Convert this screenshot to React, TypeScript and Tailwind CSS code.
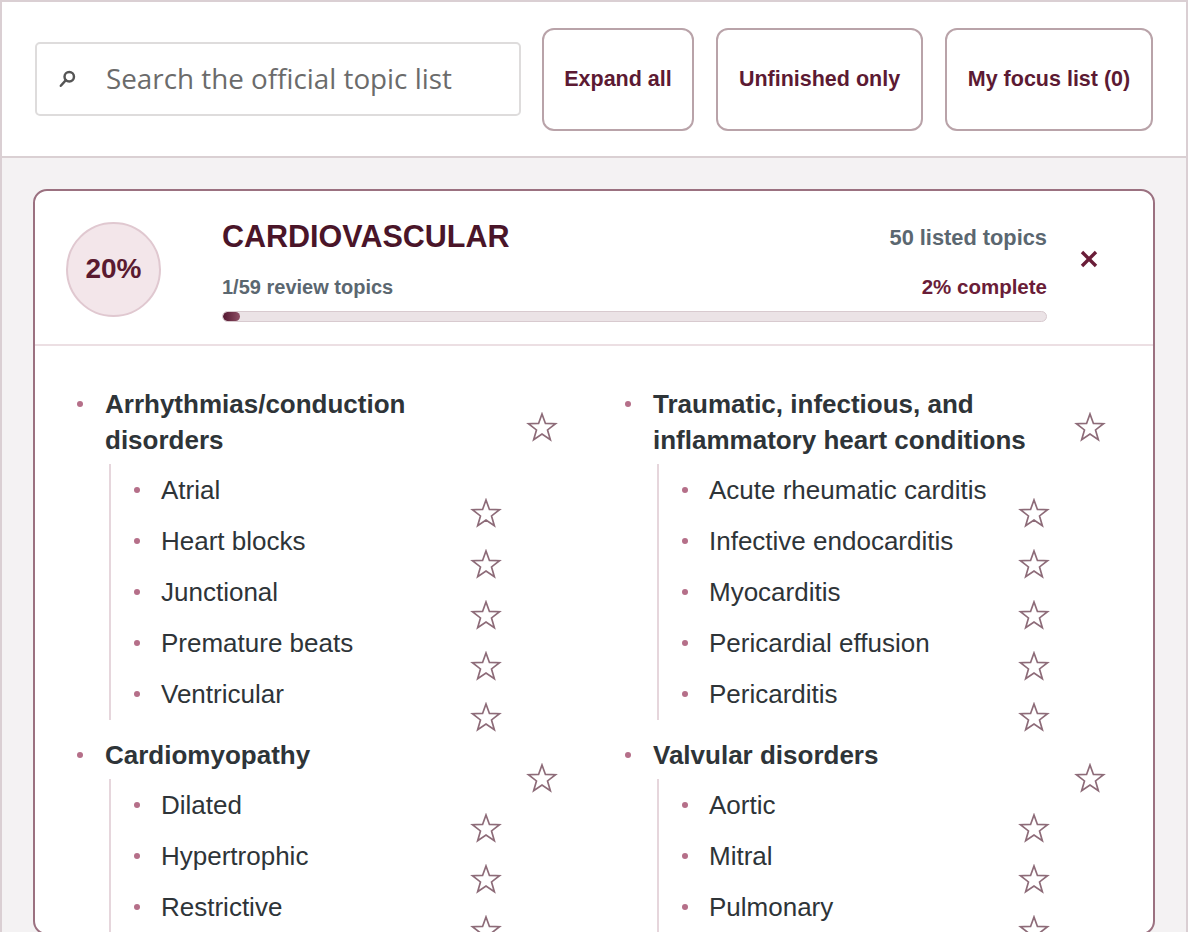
import React from 'react'

const sans = { fontFamily: '"Liberation Sans", Arial, Helvetica, sans-serif' }

type Topic = { name: string; subs: string[] }

const LEFT: Topic[] = [
  { name: 'Arrhythmias/conduction disorders', subs: ['Atrial', 'Heart blocks', 'Junctional', 'Premature beats', 'Ventricular'] },
  { name: 'Cardiomyopathy', subs: ['Dilated', 'Hypertrophic', 'Restrictive'] },
]

const RIGHT: Topic[] = [
  {
    name: 'Traumatic, infectious, and inflammatory heart conditions',
    subs: ['Acute rheumatic carditis', 'Infective endocarditis', 'Myocarditis', 'Pericardial effusion', 'Pericarditis'],
  },
  { name: 'Valvular disorders', subs: ['Aortic', 'Mitral', 'Pulmonary'] },
]

const BUTTONS = [
  { label: 'Expand all', w: 'w-[152px]' },
  { label: 'Unfinished only', w: 'w-[207px]' },
  { label: 'My focus list (0)', w: 'w-[208px]' },
]

function Star() {
  return (
    <svg viewBox="0 0 24 24" className="w-[32px] h-[31px] shrink-0 mt-[26px] mb-[-21px] mr-[7px]">
      <polygon
        points="12,1.5 14.65,8.86 22.46,9.1 16.28,13.89 18.47,21.4 12,17 5.53,21.4 7.72,13.89 1.54,9.1 9.35,8.86"
        fill="none"
        stroke="#8d6b78"
        strokeWidth="1.3"
      />
    </svg>
  )
}

function Dot({ className = '' }: { className?: string }) {
  return <span className={'block w-[6px] h-[6px] rounded-full bg-[#b56f89] shrink-0 mt-[15px] ' + className} />
}

function TopicItem({ topic }: { topic: Topic }) {
  return (
    <li>
      <div className="flex items-start">
        <Dot className="ml-[2px]" />
        <span className="ml-[22px] mr-[10px] flex-1 text-[26px] leading-[36px] font-bold text-[#2e3438]">{topic.name}</span>
        <Star />
      </div>
      <ul className="mt-[6px] ml-[34px] mr-[56px] border-l-2 border-[#e6d6dc] pl-[23px] py-[8px] flex flex-col gap-[15px]">
        {topic.subs.map((s) => (
          <li key={s} className="flex items-start">
            <Dot />
            <span className="ml-[21px] flex-1 text-[26px] leading-[36px] text-[#2e3438]">{s}</span>
            <Star />
          </li>
        ))}
      </ul>
    </li>
  )
}

export default function App() {
  return (
    <div className="w-[1188px] h-[932px] overflow-hidden border-x-2 border-t-2 border-[#dacfd3] bg-[#f4f2f3]" style={sans}>
      <header className="h-[156px] bg-white border-b-2 border-[#dad0d3] flex items-center pl-[33px]">
        <div className="w-[486px] h-[74px] border-2 border-[#dedcdc] rounded-[5px] flex items-center pl-[21px]">
          <svg viewBox="0 0 16 16" className="w-[18px] h-[18px]">
            <circle cx="10" cy="6" r="4.2" fill="none" stroke="#555" strokeWidth="2.2" />
            <line x1="7" y1="9" x2="2.5" y2="14" stroke="#555" strokeWidth="2.2" strokeLinecap="round" />
          </svg>
          <span className="ml-[30px] text-[27.8px] text-[#6b6b6b]" style={{ fontFamily: '"Open Sans", "Noto Sans", sans-serif' }}>
            Search the official topic list
          </span>
        </div>
        <div className="flex gap-[22px] ml-[21px]">
          {BUTTONS.map((b) => (
            <button
              key={b.label}
              className={b.w + ' h-[103px] shrink-0 border-2 border-[#b9a3a9] rounded-[12px] bg-white text-[21.5px] font-bold text-[#5c1a33]'}
            >
              {b.label}
            </button>
          ))}
        </div>
      </header>

      <main className="p-[31px]">
        <section className="border-2 border-[#9b7180] rounded-[14px] bg-white">
          <div className="flex items-center pl-[31px] pr-[54px] pt-[25px] pb-[22px] border-b-2 border-[#ecdfe3]">
            <div className="w-[95px] h-[95px] shrink-0 rounded-full bg-[#f3e6ea] border-2 border-[#e0c8d0] flex items-center justify-center text-[28px] font-bold text-[#5a1a30]">
              20%
            </div>
            <div className="ml-[61px] flex-1 pt-[2px]">
              <div className="flex items-center justify-between h-[36px]">
                <h2 className="text-[30.5px] leading-[36px] font-bold text-[#4a1529]">CARDIOVASCULAR</h2>
                <span className="text-[21.8px] leading-[26px] font-bold text-[#5b6770] mt-[4px]">50 listed topics</span>
              </div>
              <div className="flex items-center justify-between mt-[21px] text-[20px] leading-[24px] font-bold">
                <span className="text-[#5b6770]">1/59 review topics</span>
                <span className="text-[#6a1d38] text-[20.5px]">2% complete</span>
              </div>
              <div className="mt-[12px] h-[11px] rounded-full bg-[#ebe3e6] border border-[#d8cacf] overflow-hidden">
                <div className="h-full w-[17px] rounded-full bg-gradient-to-r from-[#531630] to-[#8f5066]" />
              </div>
            </div>
            <svg viewBox="0 0 20 20" className="w-[20px] h-[20px] ml-[32px] mb-[20px]">
              <path d="M3 3 L17 17 M17 3 L3 17" stroke="#6a1d38" strokeWidth="3.4" />
            </svg>
          </div>

          <div className="grid grid-cols-2 gap-x-[58px] px-[40px] pt-[40px]">
            {[LEFT, RIGHT].map((col, i) => (
              <ul key={i} className="flex flex-col gap-[17px]">
                {col.map((t) => (
                  <TopicItem key={t.name} topic={t} />
                ))}
              </ul>
            ))}
          </div>
        </section>
      </main>
    </div>
  )
}
